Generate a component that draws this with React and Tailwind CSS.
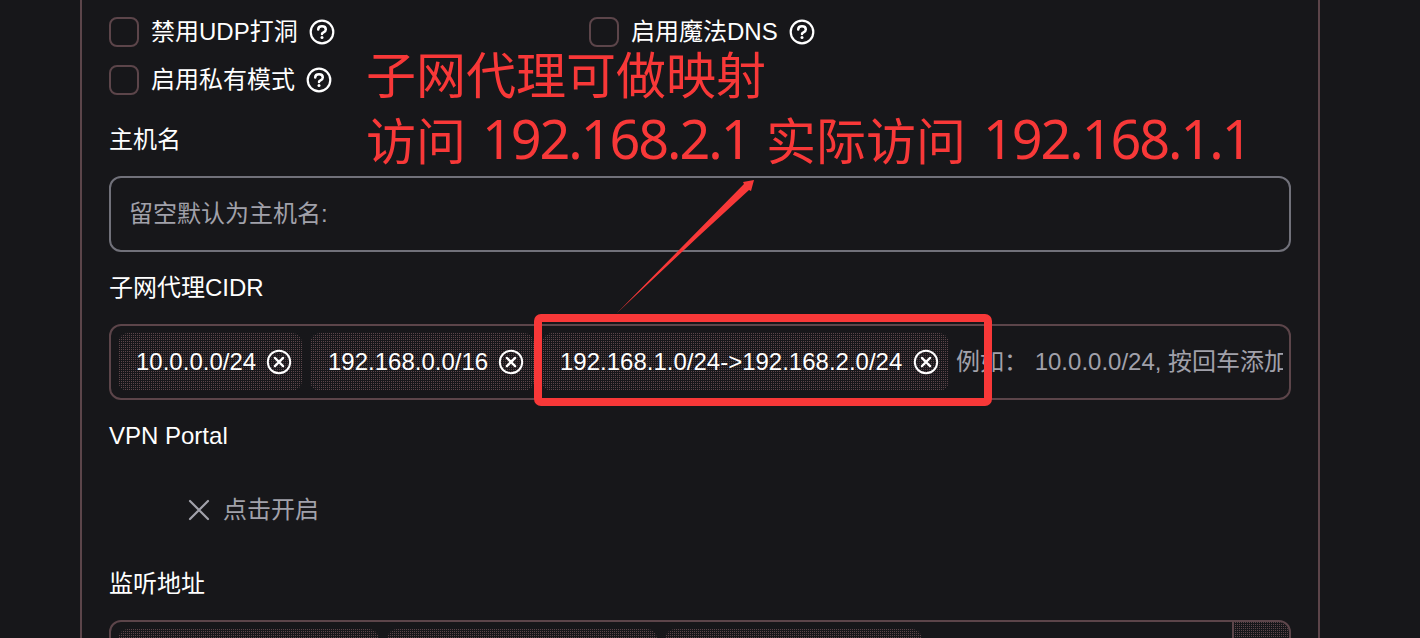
const dots =
  'bg-[conic-gradient(#5c454a_25%,transparent_0)] bg-[length:2px_2px]';

function HelpIcon() {
  return (
    <svg className="ml-[11px] size-[26px] shrink-0" viewBox="0 0 26 26" fill="none" stroke="currentColor" strokeLinecap="round">
      <circle cx="13" cy="13" r="11.3" strokeWidth="2.2" />
      <path d="M9.2 10.4C9.2 8.3 10.8 7.2 13 7.2s3.8 1.2 3.8 3.2c0 2-1.6 2.6-2.7 3.2-.8.4-1.1.8-1.1 1.5" strokeWidth="2.5" />
      <circle cx="13" cy="18.6" r="1.5" fill="currentColor" stroke="none" />
    </svg>
  );
}

function RemoveIcon() {
  return (
    <svg className="size-[26px] shrink-0" viewBox="0 0 26 26" fill="none" stroke="currentColor" strokeLinecap="round">
      <circle cx="13" cy="13" r="11.2" strokeWidth="2" />
      <path d="M8.9 8.9l8.2 8.2M17.1 8.9l-8.2 8.2" strokeWidth="2.3" />
    </svg>
  );
}

function Option({ label }) {
  return (
    <div className="flex h-[30px] w-[480px] items-center">
      <span className="size-[30px] shrink-0 rounded-[8px] border-2 border-[#5c454a]" />
      <span className="ml-3 whitespace-nowrap">{label}</span>
      <HelpIcon />
    </div>
  );
}

function Label({ children }) {
  return <div className="flex h-9 items-center whitespace-nowrap">{children}</div>;
}

function Chip({ width, children }) {
  return (
    <div className={`flex h-[58px] shrink-0 items-center justify-between whitespace-nowrap rounded-[10px] pl-[18px] pr-[10px] ${dots} ${width}`}>
      {children && <span>{children}</span>}
      {children && <RemoveIcon />}
    </div>
  );
}

function Annotations() {
  return (
    <div className="pointer-events-none absolute inset-0 text-[#f83838]">
      <div className="absolute left-[366px] top-[44px] whitespace-nowrap text-[50px] leading-[66px]">
        <div className="h-[66px]">子网代理可做映射</div>
        <div className="flex">
          <span className="w-[116px]">访问</span>
          <span className="-mt-[5px] w-[284px] font-['Noto_Sans'] text-[54px] tracking-[-2.1px]">192.168.2.1</span>
          <span className="w-[217px]">实际访问</span>
          <span className="-mt-[5px] font-['Noto_Sans'] text-[54px] tracking-[-2.1px]">192.168.1.1</span>
        </div>
      </div>
      <svg className="absolute left-[610px] top-[174px] h-[146px] w-[152px]" viewBox="610 174 152 146" fill="currentColor">
        <path d="M617 313L744 184 743 182 754 180 751 191 749 190 700 235Z" />
      </svg>
      <div className="absolute left-[534px] top-[314px] h-[92px] w-[458px] rounded-[7px] border-8 border-[#f83838]" />
    </div>
  );
}

export default function App() {
  return (
    <div className="relative h-[638px] w-[1420px] overflow-hidden bg-[#17171a] font-['Liberation_Sans','Noto_Sans_CJK_SC',sans-serif] text-[24px] leading-[36px] text-white">
      <main className="ml-[80px] h-full w-[1240px] border-x-2 border-[#5c454a] px-[27px] pt-[17px]">
        <div className="flex flex-col gap-[18px]">
          <div className="flex">
            <Option label="禁用UDP打洞" />
            <Option label="启用魔法DNS" />
          </div>
          <Option label="启用私有模式" />
        </div>

        <div className="mt-[27px]">
          <Label>主机名</Label>
          <div className="mt-[18px] flex h-[76px] items-center rounded-[12px] border-2 border-[#71717a] pl-[18px] text-[#a1a1aa]">
            留空默认为主机名:
          </div>
        </div>

        <div className="mt-[18px]">
          <Label>子网代理CIDR</Label>
          <div className="mt-[18px] flex h-[76px] items-center gap-2 overflow-hidden rounded-[12px] border-2 border-[#5c454a] pl-[7px] pr-[6px]">
            <Chip width="w-[184px]">10.0.0.0/24</Chip>
            <Chip width="w-[224px]">192.168.0.0/16</Chip>
            <Chip width="w-[407px]">192.168.1.0/24-&gt;192.168.2.0/24</Chip>
            <span className="-ml-[1px] min-w-0 flex-1 overflow-hidden whitespace-nowrap text-[#a1a1aa]">
              例如： 10.0.0.0/24, 按回车添加
            </span>
          </div>
        </div>

        <div className="mt-[18px]">
          <Label>VPN Portal</Label>
          <div className="mt-[18px] flex h-[76px] items-center pl-[79px] text-[#a1a1aa]">
            <svg className="mr-[13px] size-[22px]" viewBox="0 0 22 22" fill="none" stroke="currentColor" strokeWidth="2.2" strokeLinecap="round">
              <path d="M2 2l18 18M20 2L2 20" />
            </svg>
            点击开启
          </div>
        </div>

        <div className="mt-[18px]">
          <Label>监听地址</Label>
          <div className="mt-[18px] flex h-[76px] justify-between overflow-hidden rounded-[12px] border-2 border-[#5c454a]">
            <div className="flex gap-2 pl-[7px] pt-[7px]">
              <Chip width="w-[261px]" />
              <Chip width="w-[270px]" />
              <Chip width="w-[257px]" />
            </div>
            <div className={`w-[57px] border-l-2 border-[#5c454a] ${dots}`} />
          </div>
        </div>
      </main>
      <Annotations />
    </div>
  );
}
